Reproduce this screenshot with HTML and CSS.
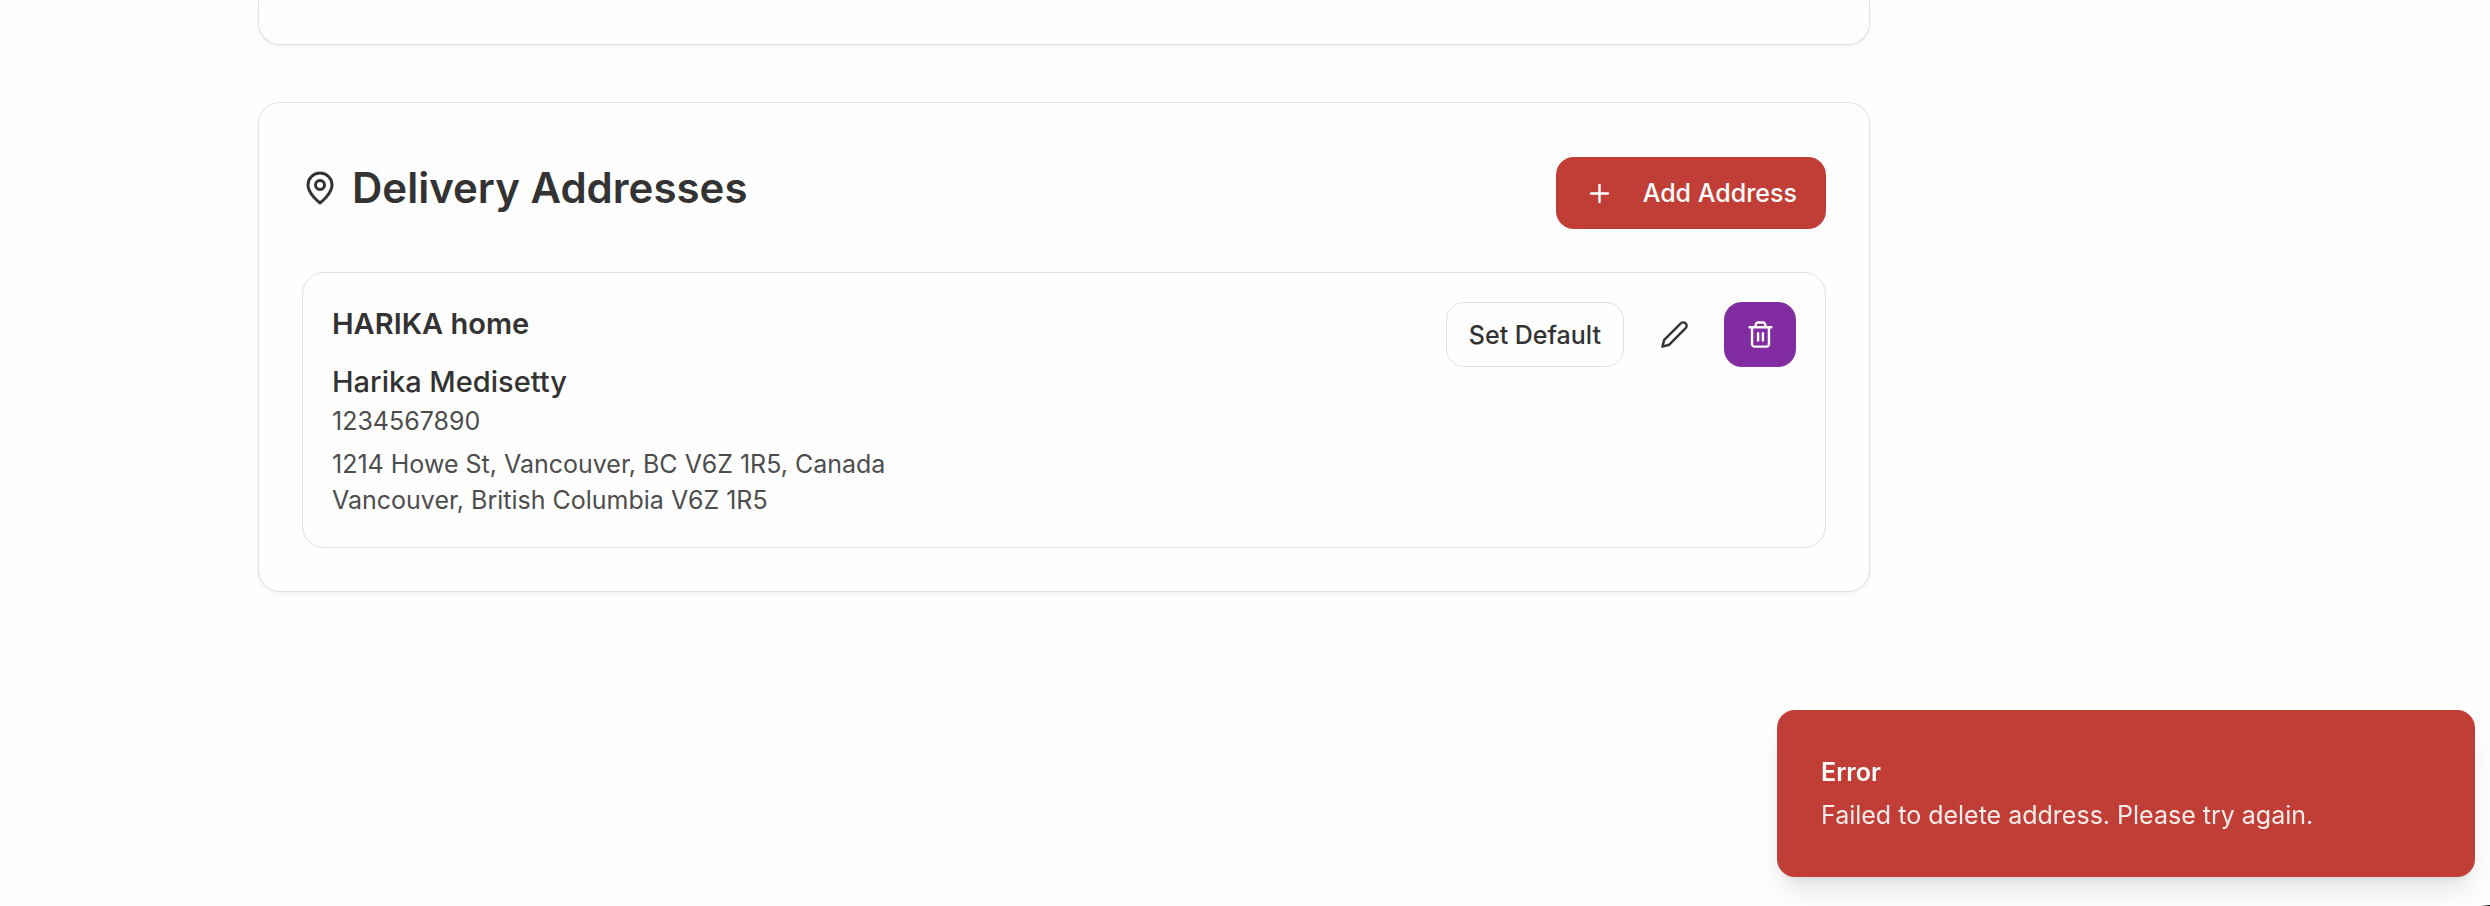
FILE: index.html
```html
<!DOCTYPE html>
<html lang="en">
<head>
<meta charset="utf-8">
<title>Delivery Addresses</title>
<link rel="stylesheet" href="styles.css">
</head>
<body>
<main class="page">
  <section class="card card-previous" aria-label="Profile"></section>
  <section class="card" aria-labelledby="addresses-title">
    <header class="card-header">
      <h2 class="card-title" id="addresses-title">
        <svg class="icon-title" viewBox="0 0 24 24" aria-hidden="true"><path d="M20 10c0 6-8 12-8 12s-8-6-8-12a8 8 0 0 1 16 0Z"/><circle cx="12" cy="10" r="3"/></svg>
        Delivery Addresses
      </h2>
      <button class="button button-primary" type="button">
        <svg class="icon" viewBox="0 0 24 24" aria-hidden="true"><path d="M5 12h14M12 5v14"/></svg>
        Add Address
      </button>
    </header>
    <article class="address">
      <div class="address-body">
        <h3 class="address-label">HARIKA home</h3>
        <p class="address-name">Harika Medisetty</p>
        <p class="address-line">1234567890</p>
        <p class="address-line address-street">1214 Howe St, Vancouver, BC V6Z 1R5, Canada</p>
        <p class="address-line">Vancouver, British Columbia V6Z 1R5</p>
      </div>
      <div class="address-actions">
        <button class="button button-outline" type="button">Set Default</button>
        <button class="button button-ghost" type="button" aria-label="Edit address">
          <svg class="icon" viewBox="0 0 24 24" aria-hidden="true"><path d="M17 3a2.85 2.83 0 1 1 4 4L7.5 20.5 2 22l1.5-5.5Z"/></svg>
        </button>
        <button class="button button-danger" type="button" aria-label="Delete address">
          <svg class="icon" viewBox="0 0 24 24" aria-hidden="true"><path d="M3 6h18M19 6v14c0 1-1 2-2 2H7c-1 0-2-1-2-2V6M8 6V4c0-1 1-2 2-2h4c1 0 2 1 2 2v2M10 11v6M14 11v6"/></svg>
        </button>
      </div>
    </article>
  </section>
</main>
<div class="toast" role="alert">
  <p class="toast-title">Error</p>
  <p class="toast-text">Failed to delete address. Please try again.</p>
</div>
<div class="corner" aria-hidden="true"></div>
</body>
</html>
```
FILE: styles.css
```css
:root {
  --text: #333333;
  --muted: #4d4d4d;
  --border: #e0e0e0;
  --red: #c13e36;
  --purple: #822ca2;
}

* { box-sizing: border-box; }

body {
  margin: 0;
  background: #fefefe;
  color: var(--text);
  font-family: Inter, "Liberation Sans", sans-serif;
  font-size: 25px;
  line-height: 36px;
}

h2, h3, p { margin: 0; }

.page {
  display: flex;
  flex-direction: column;
  gap: 57px;
  padding: 0 620px 57px 258px;
}

.card {
  padding: 54px 43px 43px;
  border: 1px solid var(--border);
  border-radius: 22px;
  background: #fefefe;
  box-shadow: 0 2px 4px rgba(0, 0, 0, 0.05);
}

.card-previous {
  padding: 0 0 44px;
  border-top: 0;
  border-radius: 0 0 22px 22px;
}

.card-header {
  display: flex;
  justify-content: space-between;
  align-items: flex-start;
  margin-bottom: 43px;
}

.card-title {
  display: flex;
  align-items: center;
  gap: 14px;
  font-size: 42px;
  font-weight: 600;
  line-height: 62px;
}

.icon, .icon-title {
  flex: none;
  fill: none;
  stroke: currentColor;
  stroke-width: 2;
  stroke-linecap: round;
  stroke-linejoin: round;
}

.icon { width: 29px; height: 29px; }
.icon-title { width: 36px; height: 36px; }

.button {
  display: flex;
  align-items: center;
  justify-content: center;
  height: 65px;
  border: 0;
  border-radius: 18px;
  background: transparent;
  color: inherit;
  font: inherit;
  font-weight: 500;
  white-space: nowrap;
}

.button-primary {
  gap: 29px;
  height: 72px;
  padding: 0 29px;
  background: var(--red);
  color: #ffffff;
}

.button-outline {
  padding: 0 22px;
  border: 1px solid var(--border);
}

.button-ghost, .button-danger { width: 72px; }

.button-danger {
  background: var(--purple);
  color: #ffffff;
}

.address {
  display: flex;
  justify-content: space-between;
  align-items: flex-start;
  padding: 29px;
  border: 1px solid var(--border);
  border-radius: 22px;
}

.address-label {
  margin-bottom: 15px;
  font-size: 29px;
  font-weight: 600;
  line-height: 43px;
}

.address-name {
  font-size: 29px;
  font-weight: 500;
  line-height: 43px;
}

.address-line { color: var(--muted); }
.address-street { margin-top: 7px; }

.address-actions {
  display: flex;
  gap: 14px;
}

.toast {
  position: fixed;
  right: 15px;
  bottom: 29px;
  width: 698px;
  padding: 44px;
  border-radius: 18px;
  background: var(--red);
  color: #ffffff;
  box-shadow: 0 18px 27px -5px rgba(0, 0, 0, 0.1), 0 7px 11px -7px rgba(0, 0, 0, 0.1);
}

.toast-title { margin-bottom: 7px; font-weight: 600; }
.toast-text { opacity: 0.9; }

.corner {
  position: fixed;
  right: 0;
  bottom: 0;
  width: 9px;
  height: 1px;
  background: linear-gradient(to right, transparent, #000000);
}
```
